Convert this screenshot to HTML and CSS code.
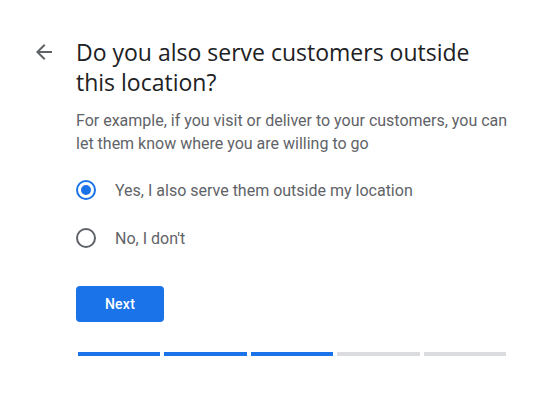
FILE: index.html
```html
<!DOCTYPE html>
<html lang="en">
<head>
  <meta charset="UTF-8">
  <meta name="viewport" content="width=device-width, initial-scale=1.0">
  <title>Service area</title>
  <link rel="stylesheet" href="styles.css">
</head>
<body>
  <div class="screen">
    <button class="back" aria-label="Back">
      <svg viewBox="0 0 24 24" width="24" height="24"><path d="M20 11H7.83l5.59-5.59L12 4l-8 8 8 8 1.41-1.41L7.83 13H20v-2z" fill="#5f6368"/></svg>
    </button>
    <div class="content">
      <h1 class="title">Do you also serve customers outside this location?</h1>
      <p class="desc">For example, if you visit or deliver to your customers, you can let them know where you are willing to go</p>
      <div class="options">
        <label class="option">
          <span class="radio checked"></span>
          <span>Yes, I also serve them outside my location</span>
        </label>
        <label class="option">
          <span class="radio"></span>
          <span>No, I don't</span>
        </label>
      </div>
      <button class="btn">Next</button>
      <div class="progress">
        <span class="step done"></span>
        <span class="step done"></span>
        <span class="step done"></span>
        <span class="step"></span>
        <span class="step"></span>
      </div>
    </div>
  </div>
</body>
</html>
```

FILE: styles.css
```css
body {
  margin: 0;
  background: #fff;
  font-family: Roboto, Arial, sans-serif;
  color: #202124;
}
.screen {
  display: flex;
  align-items: flex-start;
  padding: 37px 44px 0 32px;
}
.back {
  width: 24px;
  height: 24px;
  padding: 0;
  margin: 3px 20px 0 0;
  border: none;
  background: none;
  flex: none;
}
.back svg {
  display: block;
}
.content {
  flex: 1;
}
.title {
  margin: 0;
  max-width: 405px;
  font-family: 'Open Sans', Arial, sans-serif;
  font-size: 23px;
  font-weight: 400;
  line-height: 30px;
  color: #202124;
}
.desc {
  margin: 12px 0 0 0;
  font-size: 16px;
  line-height: 23px;
  color: #5f6368;
}
.options {
  display: flex;
  flex-direction: column;
  gap: 28px;
  margin-top: 25px;
}
.option {
  display: flex;
  align-items: center;
  gap: 19px;
  font-size: 16px;
  color: #5f6368;
}
.radio {
  width: 16px;
  height: 16px;
  border: 2px solid #5f6368;
  border-radius: 50%;
  display: flex;
  align-items: center;
  justify-content: center;
}
.radio.checked {
  border-color: #1a73e8;
}
.radio.checked::after {
  content: '';
  width: 10px;
  height: 10px;
  border-radius: 50%;
  background: #1a73e8;
}
.btn {
  margin-top: 38px;
  width: 88px;
  height: 36px;
  border: none;
  border-radius: 4px;
  background: #1a73e8;
  color: #fff;
  font-family: Roboto, Arial, sans-serif;
  font-size: 14px;
  font-weight: 500;
  letter-spacing: 0.25px;
}
.progress {
  display: flex;
  gap: 4px;
  margin: 30px 6px 0 2px;
}
.step {
  flex: 1;
  height: 4px;
  background: #dadce0;
}
.step.done {
  background: #1a73e8;
}
```
